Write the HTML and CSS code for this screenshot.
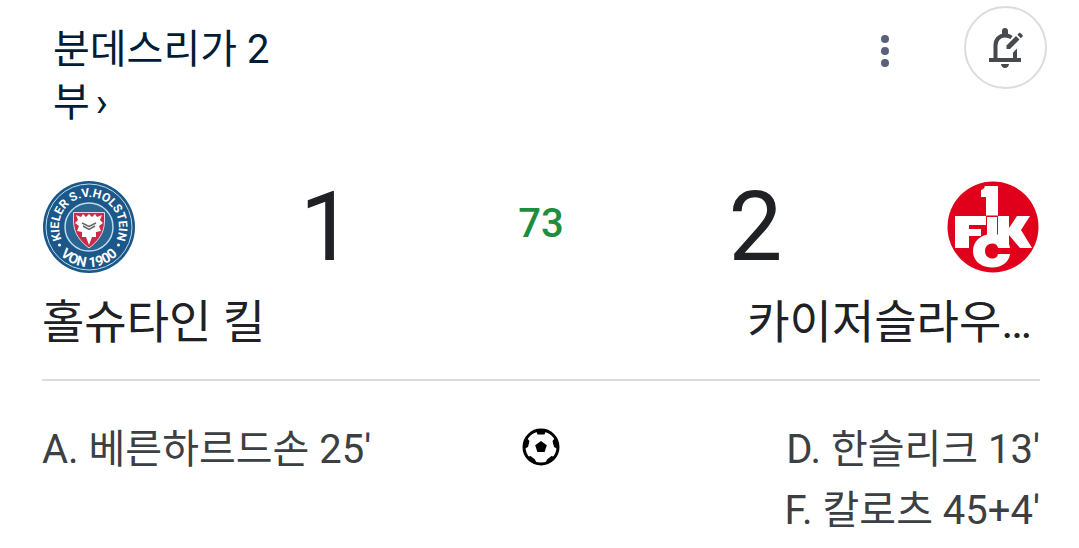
FILE: index.html
```html
<!DOCTYPE html>
<html lang="ko">
<head>
    <meta charset="UTF-8">
    <meta name="viewport" content="width=device-width, initial-scale=1.0">
    <title>홀슈타인 킬 - 카이저슬라우테른</title>
    <link rel="stylesheet" href="styles.css">
</head>
<body>
    <main class="match">
        <header class="match-header">
            <a class="league" href="#">분데스리가 2부<span class="chevron">›</span></a>
            <div class="actions">
                <button class="menu-btn" type="button" aria-label="메뉴">
                    <svg width="10" height="34" viewBox="0 0 10 34" fill="#59617d">
                        <circle cx="5" cy="5" r="4"/>
                        <circle cx="5" cy="17" r="4"/>
                        <circle cx="5" cy="29" r="4"/>
                    </svg>
                </button>
                <button class="bell-btn" type="button" aria-label="알림">
                    <svg width="36" height="42" viewBox="0 0 36 42" fill="#474a4d">
                        <path d="M7.500 33V18.500C7.500 12.500 11.500 8.500 17 8.500C19.500 8.500 21.500 9 23.500 10.500" fill="none" stroke="#474a4d" stroke-width="4"/>
                        <circle cx="17" cy="4" r="3"/>
                        <path d="M14 4H20V9H14Z"/>
                        <path d="M1 31H33V35H1Z"/>
                        <path d="M13 37H21C21 39.200 19.300 41 17 41S13 39.200 13 37Z"/>
                        <path d="M25 25.500L29 21.500V32H25Z"/>
                        <path d="M18.500 18.500L28 9L31.500 12.500L22 22H18.500Z"/>
                        <path d="M29.300 7.700L31 6Q31.700 5.400 32.400 6L34.500 8.100Q35.100 8.800 34.500 9.500L32.800 11.200Z"/>
                    </svg>
                </button>
            </div>
        </header>

        <section class="scoreboard">
            <svg class="crest" viewBox="0 0 92 92" role="img" aria-label="홀슈타인 킬">
                <defs>
                    <path id="arcTop" d="M24.800 67.200A30 30 0 1 1 67.200 67.200"/>
                    <path id="arcBottom" d="M6 46A40 40 0 0 0 86 46"/>
                </defs>
                <circle cx="46" cy="46" r="46" fill="#1b5788"/>
                <circle cx="46" cy="46" r="43" fill="none" stroke="#b9dcf0" stroke-width="1"/>
                <circle cx="46" cy="46" r="24" fill="#2b6592" stroke="#b9dcf0" stroke-width="1.500"/>
                <text class="crest-text"><textPath href="#arcTop" startOffset="50%" text-anchor="middle">KIELER S.V.HOLSTEIN</textPath></text>
                <text class="crest-text crest-year"><textPath href="#arcBottom" startOffset="50%" text-anchor="middle">VON 1900</textPath></text>
                <circle cx="16.500" cy="64" r="1.500" fill="#fff"/>
                <circle cx="75.500" cy="64" r="1.500" fill="#fff"/>
                <path d="M30.500 31.500H61.500V40C61.500 53 54 61 46 67C38 61 30.500 53 30.500 40Z" fill="#c92b49" stroke="#e9d4df" stroke-width="1"/>
                <path d="M33 34L38 36L40 33L43 36L46 33L49 36L52 33L54 36L59 34L57 39L60 42L56 45L58 50L53 51L53 56L49 56L46 64L43 56L39 56L39 51L34 50L36 45L32 42L35 39Z" fill="#fff"/>
                <path d="M39 42L46 45.500L53 42M40 45L46 48.500L52 45" fill="none" stroke="#666" stroke-width="1.500"/>
            </svg>
            <span class="score">1</span>
            <span class="minute">73</span>
            <span class="score">2</span>
            <svg class="crest" viewBox="0 0 92 92" role="img" aria-label="카이저슬라우테른">
                <circle cx="46" cy="46" r="45.500" fill="#e1001b"/>
                <!-- the mark: 1 above, F and K at the sides, C below -->
                <path d="M38 5H51V34.500H39V16H34V9Q37 8.500 38 5Z" fill="#fff"/>
                <path d="M8 35H39V44H22V48H34V55H22V67H8Z" fill="#fff"/>
                <path d="M40 36H50V58H40Z" fill="#fff"/>
                <path d="M51 35H62V47L70 35H83L74 49L85 67H73L62 54V67H51Z" fill="#fff"/>
                <path d="M45.500 53C56 53 62 59 63 67H51C50.500 64 48.500 62.500 45.500 62.500C41 62.500 38 65.500 38 70C38 74.500 41 77.500 45.500 77.500C48.500 77.500 50.500 76 51 73H63C62 81 55 86.500 45.500 86.500C34 86.500 26 80 26 70C26 60 34 53 45.500 53Z" fill="#fff"/>
            </svg>
        </section>

        <section class="teams">
            <span>홀슈타인 킬</span>
            <span class="team-away">카이저슬라우…</span>
        </section>

        <section class="goals">
            <ul class="scorers">
                <li>A. 베른하르드손 25'</li>
            </ul>
            <svg class="ball" viewBox="0 0 38 38" role="img" aria-label="골">
                <circle cx="19" cy="19" r="17" fill="#fff" stroke="#000" stroke-width="3"/>
                <path d="M19 13L24.800 17.200L22.600 24H15.400L13.200 17.200Z"/>
                <path d="M14 2H24L22.500 6.500H15.500ZM35.500 14L36 21L32 19L30.500 13L34 9ZM29 34L23 36L25 31.500L29.500 28L33 29ZM9 34L15 36L13 31.500L8.500 28L5 29ZM2.500 14L2 21L6 19L7.500 13L4 9Z"/>
            </svg>
            <ul class="scorers scorers-away">
                <li>D. 한슬리크 13'</li>
                <li>F. 칼로츠 45+4'</li>
            </ul>
        </section>
    </main>
</body>
</html>
```
FILE: styles.css
```css
body {
    margin: 0;
    background: #fff;
    color: #202124;
    font-family: Roboto, "Noto Sans CJK KR", sans-serif;
}

.match {
    padding: 0 39px 0 42px;
}

/* Header */
.match-header {
    display: flex;
    justify-content: space-between;
    align-items: flex-start;
    height: 181px;
}

.league {
    width: 240px;
    margin: 23px 0 0 11px;
    color: #001d35;
    font-size: 40px;
    line-height: 53px;
    text-decoration: none;
}

.chevron {
    padding-left: 6px;
}

.actions {
    display: flex;
    align-items: center;
    gap: 64px;
    margin: 6px -7px 0 0;
}

.menu-btn,
.bell-btn {
    display: flex;
    justify-content: center;
    align-items: center;
    padding: 0;
    border: none;
    background: none;
    cursor: pointer;
}

.menu-btn {
    width: 30px;
    height: 48px;
    padding-top: 6px;
}

.bell-btn {
    width: 83px;
    height: 83px;
    border: 2px solid #dadce0;
    border-radius: 50%;
}

/* Scores */
.scoreboard {
    display: grid;
    grid-template-columns: 92px 1fr auto 1fr 92px;
    align-items: center;
    height: 92px;
    padding: 0 1px;
}

.crest {
    display: block;
    width: 92px;
    height: 92px;
}

.crest-text {
    fill: #fff;
    font-size: 12px;
    font-weight: bold;
}

.crest-year {
    font-size: 14px;
}

.score {
    font-size: 96px;
    line-height: 92px;
    text-align: center;
}

.minute {
    padding-bottom: 8px;
    color: #1e8e3e;
    font-size: 40px;
    font-weight: 500;
}

/* Team names */
.teams {
    display: flex;
    justify-content: space-between;
    padding: 16px 0 24px;
    border-bottom: 2px solid #dadce0;
    font-size: 46px;
    line-height: 66px;
}

.team-away {
    padding-right: 8px;
}

/* Goals */
.goals {
    display: grid;
    grid-template-columns: 1fr 38px 1fr;
    padding-top: 38px;
    color: #3c4043;
    font-size: 40px;
    line-height: 61px;
}

.ball {
    width: 38px;
    height: 38px;
    margin-top: 9px;
}

.scorers {
    margin: 0;
    padding: 0;
    list-style: none;
}

.scorers-away {
    text-align: right;
}
```
